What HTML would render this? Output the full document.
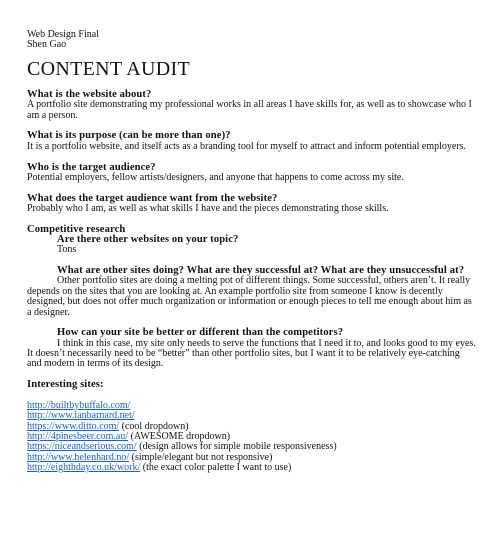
<!DOCTYPE html>
<html><head><meta charset="utf-8"><style>
html,body{margin:0;padding:0;background:#fff;width:500px;height:536px;overflow:hidden}
body{font-family:"Liberation Serif",serif;font-size:10px;color:#111;letter-spacing:0}
.blk{position:absolute;left:27px;white-space:nowrap}
.blk div{height:10.36px;line-height:10.36px;overflow:visible}
b{font-weight:bold;font-size:10.6px;letter-spacing:0.1px}
.i{padding-left:30px}
a{color:#1a5fc8;text-decoration:underline}
h1{position:absolute;left:27px;top:57px;margin:0;font-weight:normal;font-size:20px;line-height:24px;letter-spacing:0.3px}
</style></head><body>
<div class="blk" style="top:30px"><div>Web Design Final</div><div>Shen Gao</div></div>
<h1>CONTENT AUDIT</h1>
<div class="blk" style="top:90px">
<div><b>What is the website about?</b></div>
<div>A portfolio site demonstrating my professional works in all areas I have skills for, as well as to showcase who I</div>
<div>am a person.</div><div></div>
<div><b>What is its purpose (can be more than one)?</b></div>
<div>It is a portfolio website, and itself acts as a branding tool for myself to attract and inform potential employers.</div><div></div>
<div><b>Who is the target audience?</b></div>
<div>Potential employers, fellow artists/designers, and anyone that happens to come across my site.</div><div></div>
<div><b>What does the target audience want from the website?</b></div>
<div>Probably who I am, as well as what skills I have and the pieces demonstrating those skills.</div><div></div>
<div><b>Competitive research</b></div>
<div class="i"><b>Are there other websites on your topic?</b></div>
<div class="i">Tons</div><div></div>
<div class="i"><b>What are other sites doing? What are they successful at? What are they unsuccessful at?</b></div>
<div class="i">Other portfolio sites are doing a melting pot of different things. Some successful, others aren’t. It really</div>
<div>depends on the sites that you are looking at. An example portfolio site from someone I know is decently</div>
<div>designed, but does not offer much organization or information or enough pieces to tell me enough about him as</div>
<div>a designer.</div><div></div>
<div class="i"><b>How can your site be better or different than the competitors?</b></div>
<div class="i">I think in this case, my site only needs to serve the functions that I need it to, and looks good to my eyes.</div>
<div>It doesn’t necessarily need to be “better” than other portfolio sites, but I want it to be relatively eye-catching</div>
<div>and modern in terms of its design.</div><div></div>
<div><b>Interesting sites:</b></div><div></div>
<div><a>http://builtbybuffalo.com/</a></div>
<div><a>http://www.ianbarnard.net/</a></div>
<div><a>https://www.ditto.com/</a> (cool dropdown)</div>
<div><a>http://4pinesbeer.com.au/</a> (AWESOME dropdown)</div>
<div><a>https://niceandserious.com/</a> (design allows for simple mobile responsiveness)</div>
<div><a>http://www.helenhard.no/</a> (simple/elegant but not responsive)</div>
<div><a>http://eighthday.co.uk/work/</a> (the exact color palette I want to use)</div>
</div>
</body></html>
